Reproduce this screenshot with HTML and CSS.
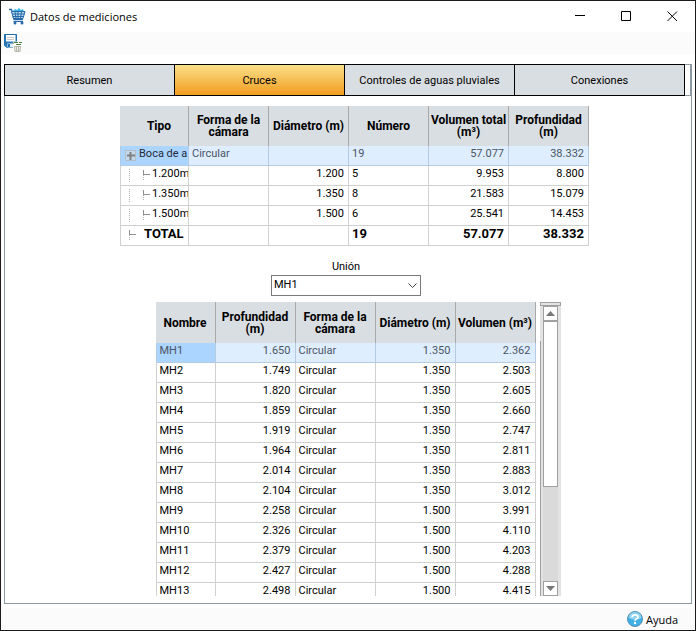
FILE: index.html
```html
<!DOCTYPE html>
<html lang="es">
<head>
    <meta charset="UTF-8">
    <meta name="viewport" content="width=device-width, initial-scale=1.0">
    <title>Datos de mediciones</title>
    <link rel="stylesheet" href="styles.css">
</head>
<body>
    <header class="titlebar">
        <svg class="app-icon" width="17" height="17" viewBox="0 0 17 17" aria-hidden="true">
            <path d="M4 3l2-2 2 1 2-2 2 2 2-1 1 3z" fill="#35b5e8"/>
            <path d="M0 1.500h2.500L5 11.500h9" fill="none" stroke="#2a6aa8" stroke-width="1.300"/>
            <path d="M2.500 3.500h13.500l-2 7H4.500z" fill="#b7dcf0" stroke="#2a6aa8"/>
            <path d="M3.500 6h12M4 8.500h11M6 4l1 6.500M9 4v6.500M12.500 4l-1 6.500" stroke="#2a6aa8" fill="none"/>
            <path d="M4.500 13.500h9.500" stroke="#2a6aa8"/>
            <circle cx="6" cy="15" r="1.500" fill="#2a6aa8"/>
            <circle cx="13" cy="15" r="1.500" fill="#2a6aa8"/>
        </svg>
        <h1 class="title">Datos de mediciones</h1>
        <button class="win-btn" aria-label="Minimizar">
            <svg width="11" height="11" viewBox="0 0 11 11"><path d="M0 4.500h10" stroke="#000"/></svg>
        </button>
        <button class="win-btn" aria-label="Maximizar">
            <svg width="11" height="11" viewBox="0 0 11 11"><path d="M.5.5h9v9h-9z" fill="none" stroke="#000"/></svg>
        </button>
        <button class="win-btn" aria-label="Cerrar">
            <svg width="11" height="11" viewBox="0 0 11 11"><path d="M.5.5l9.500 9.500M10 .5L.5 10" stroke="#000"/></svg>
        </button>
    </header>

    <div class="toolbar">
        <button class="tool-btn" aria-label="Guardar">
            <svg width="18" height="18" viewBox="0 0 18 18">
                <path d="M.5.5h12v13H3l-2.500-2z" fill="#2a7ab8" stroke="#1d6fae"/>
                <path d="M2 1h9.500v6.500H2z" fill="#fff"/>
                <path d="M3 3.500h7M3 5.500h7" stroke="#c8c8c8"/>
                <path d="M3.500 9.500h7v4h-7z" fill="#e6eef5"/>
                <path d="M4 10h2v3H4z" fill="#1d6fae"/>
                <path d="M9 7.500h9v10.500H9z" fill="#fbfbfb"/>
                <path d="M9 9.500l2-1.500M11 8.500h3M15 8.500h3M12 10.500h5" stroke="#4f7d3c"/>
                <path d="M10.500 12.500h6l-.5 5h-5zM12.500 12.500v5M14.500 12.500v5" fill="#f0f0ea" stroke="#b5b5aa"/>
            </svg>
        </button>
    </div>

    <main class="panel">
        <nav class="tabs">
            <button class="tab">Resumen</button>
            <button class="tab active">Cruces</button>
            <button class="tab">Controles de aguas pluviales</button>
            <button class="tab">Conexiones</button>
        </nav>

        <table class="grid summary">
            <thead>
                <tr>
                    <th class="tree-col">Tipo</th>
                    <th>Forma de la cámara</th>
                    <th>Diámetro (m)</th>
                    <th>Número</th>
                    <th>Volumen total (m³)</th>
                    <th>Profundidad (m)</th>
                </tr>
            </thead>
            <tbody>
                <tr class="selected">
                    <td><div class="tree"><svg width="18" height="20" viewBox="0 0 18 20"><path d="M4.500 4.500h10v10h-10z" fill="#c3d9ee" stroke="#b4bcc4"/><path d="M6 9.500h8M9.500 6v8" stroke="#808080" stroke-width="2"/></svg>Boca de a</div></td>
                    <td>Circular</td><td></td><td>19</td><td class="num">57.077</td><td class="num">38.332</td>
                </tr>
                <tr>
                    <td><div class="tree"><svg width="31" height="20" viewBox="0 0 31 20"><path d="M8.500 3v13M22.500 9v6" stroke="#b0b0b0" stroke-dasharray="1 1"/><path d="M22.500 4v5M22 8.500h7" fill="none" stroke="#909090"/></svg>1.200m</div></td>
                    <td></td><td class="num">1.200</td><td>5</td><td class="num">9.953</td><td class="num">8.800</td>
                </tr>
                <tr>
                    <td><div class="tree"><svg width="31" height="20" viewBox="0 0 31 20"><path d="M8.500 3v13M22.500 9v6" stroke="#b0b0b0" stroke-dasharray="1 1"/><path d="M22.500 4v5M22 8.500h7" fill="none" stroke="#909090"/></svg>1.350m</div></td>
                    <td></td><td class="num">1.350</td><td>8</td><td class="num">21.583</td><td class="num">15.079</td>
                </tr>
                <tr>
                    <td><div class="tree"><svg width="31" height="20" viewBox="0 0 31 20"><path d="M8.500 3v13M22.500 9v6" stroke="#b0b0b0" stroke-dasharray="1 1"/><path d="M22.500 4v5M22 8.500h7" fill="none" stroke="#909090"/></svg>1.500m</div></td>
                    <td></td><td class="num">1.500</td><td>6</td><td class="num">25.541</td><td class="num">14.453</td>
                </tr>
                <tr class="total">
                    <td><div class="tree"><svg width="23" height="20" viewBox="0 0 23 20"><path d="M8.500 9v6" stroke="#b0b0b0" stroke-dasharray="1 1"/><path d="M8.500 4v5M8 8.500h7" fill="none" stroke="#909090"/></svg>TOTAL</div></td>
                    <td></td><td></td><td>19</td><td class="num">57.077</td><td class="num">38.332</td>
                </tr>
            </tbody>
        </table>

        <div class="field">
            <label for="union">Unión</label>
            <div class="select-box">
                <select id="union">
                    <option>MH1</option>
                    <option>MH2</option>
                    <option>MH3</option>
                    <option>MH4</option>
                    <option>MH5</option>
                    <option>MH6</option>
                    <option>MH7</option>
                    <option>MH8</option>
                    <option>MH9</option>
                    <option>MH10</option>
                    <option>MH11</option>
                    <option>MH12</option>
                    <option>MH13</option>
                </select>
                <svg class="chevron" width="9" height="6" viewBox="0 0 9 6"><path d="M.5.5l4 4 4-4" fill="none" stroke="#444"/></svg>
            </div>
        </div>

        <div class="list">
            <div class="list-body">
                <table class="grid">
                    <thead>
                        <tr>
                            <th class="name-col">Nombre</th>
                            <th>Profundidad (m)</th>
                            <th>Forma de la cámara</th>
                            <th>Diámetro (m)</th>
                            <th>Volumen (m³)</th>
                        </tr>
                    </thead>
                    <tbody>
                        <tr class="selected"><td>MH1</td><td class="num">1.650</td><td>Circular</td><td class="num">1.350</td><td class="num">2.362</td></tr>
                        <tr><td>MH2</td><td class="num">1.749</td><td>Circular</td><td class="num">1.350</td><td class="num">2.503</td></tr>
                        <tr><td>MH3</td><td class="num">1.820</td><td>Circular</td><td class="num">1.350</td><td class="num">2.605</td></tr>
                        <tr><td>MH4</td><td class="num">1.859</td><td>Circular</td><td class="num">1.350</td><td class="num">2.660</td></tr>
                        <tr><td>MH5</td><td class="num">1.919</td><td>Circular</td><td class="num">1.350</td><td class="num">2.747</td></tr>
                        <tr><td>MH6</td><td class="num">1.964</td><td>Circular</td><td class="num">1.350</td><td class="num">2.811</td></tr>
                        <tr><td>MH7</td><td class="num">2.014</td><td>Circular</td><td class="num">1.350</td><td class="num">2.883</td></tr>
                        <tr><td>MH8</td><td class="num">2.104</td><td>Circular</td><td class="num">1.350</td><td class="num">3.012</td></tr>
                        <tr><td>MH9</td><td class="num">2.258</td><td>Circular</td><td class="num">1.500</td><td class="num">3.991</td></tr>
                        <tr><td>MH10</td><td class="num">2.326</td><td>Circular</td><td class="num">1.500</td><td class="num">4.110</td></tr>
                        <tr><td>MH11</td><td class="num">2.379</td><td>Circular</td><td class="num">1.500</td><td class="num">4.203</td></tr>
                        <tr><td>MH12</td><td class="num">2.427</td><td>Circular</td><td class="num">1.500</td><td class="num">4.288</td></tr>
                        <tr><td>MH13</td><td class="num">2.498</td><td>Circular</td><td class="num">1.500</td><td class="num">4.415</td></tr>
                    </tbody>
                </table>
            </div>
            <div class="scroll">
                <div class="scroll-cap"></div>
                <div class="scroll-bar">
                    <button class="scroll-btn" aria-label="Subir"><svg width="9" height="5" viewBox="0 0 9 5"><path d="M0 5l4.500-5L9 5z" fill="#777"/></svg></button>
                    <div class="track"><div class="thumb"></div></div>
                    <button class="scroll-btn" aria-label="Bajar"><svg width="9" height="5" viewBox="0 0 9 5"><path d="M0 0l4.500 5L9 0z" fill="#777"/></svg></button>
                </div>
            </div>
        </div>
    </main>

    <footer class="statusbar">
        <button class="help">
            <svg width="16" height="16" viewBox="0 0 16 16" aria-hidden="true">
                <circle cx="8" cy="8" r="7.500" fill="#3fb0e6" stroke="#5a8fb0"/>
                <path d="M1.500 7a6.500 6 0 0 1 13 0q-6 3-13 0z" fill="#8fd2f2"/>
                <path d="M5 6.300q.2-2.500 3-2.500t3 2.200q0 1.300-1.700 2-1.300.6-1.300 1.800" fill="none" stroke="#fff" stroke-width="1.800"/>
                <circle cx="8" cy="12" r="1.200" fill="#fff"/>
            </svg>
            Ayuda
        </button>
    </footer>
</body>
</html>
```
FILE: styles.css
```css
* {
    box-sizing: border-box;
}
body {
    margin: 0;
    height: 100vh;
    display: flex;
    flex-direction: column;
    border: 1px solid #1c1a1c;
    background: #fff;
    color: #000;
    font-family: Roboto, "Liberation Sans", sans-serif;
    font-size: 11px;
}
button {
    margin: 0;
    padding: 0;
    border: 0;
    background: none;
    color: inherit;
    font: inherit;
}
svg {
    display: block;
    flex: none;
}

/* window frame */
.titlebar {
    display: flex;
    align-items: center;
    height: 31px;
    padding-left: 8px;
}
.title {
    flex: 1;
    margin: 0 0 0 4px;
    font: 11px "Open Sans", sans-serif;
}
.win-btn {
    display: flex;
    align-items: center;
    justify-content: center;
    width: 46px;
    height: 30px;
}
.toolbar {
    height: 22px;
    padding: 2px 3px;
    background: #fbfbfb;
}
.tool-btn {
    display: block;
}
.statusbar {
    display: flex;
    justify-content: flex-end;
    height: 22px;
    padding-right: 17px;
    background: #fbfbfb;
}
.help {
    display: flex;
    align-items: center;
    gap: 3px;
    font: 11px "Open Sans", sans-serif;
}

.panel {
    flex: 1;
    min-height: 0;
    display: flex;
    flex-direction: column;
    align-items: center;
    margin: 10px 3px 4px;
    padding-bottom: 7px;
    border: 1px solid #8c9aa3;
}

/* tabs */
.tabs {
    display: flex;
    align-self: stretch;
    height: 32px;
    margin: -1px 6px 10px -1px;
    border: 1px solid #000;
    border-left: 0;
    box-shadow: 6px 0 0 -1px #fff, 6px 0 0 0 #8c9aa3;
}
.tab {
    flex: 1;
    border-left: 1px solid #000;
    background: #d9dee2;
}
.tab.active {
    background: linear-gradient(#fbe08a, #f19c1f);
}

/* tables */
.grid {
    table-layout: fixed;
    border-collapse: separate;
    border-spacing: 0;
}
.grid th {
    width: 80px;
    height: 40px;
    padding: 0;
    border-right: 1px solid #a9a9a9;
    background: #d9dee2;
    font-size: 12px;
    line-height: 12px;
}
.grid td {
    height: 20px;
    padding: 0 4px 0 3px;
    border-right: 1px solid #d0d0d0;
    border-bottom: 1px solid #d0d0d0;
    line-height: 15px;
    vertical-align: top;
    white-space: nowrap;
}
.grid td:first-child {
    border-left: 1px solid #d0d0d0;
}
.grid .num {
    text-align: right;
}
.grid .selected td {
    border-color: #b5cbe3;
    background: #deeeff;
    color: #4b5563;
}
.grid .selected td:first-child {
    background: #abd4ff;
}
.summary {
    width: 469px;
    margin-left: 13px;
}
.grid .tree-col {
    width: 69px;
    padding-left: 10px;
}
.summary td:first-child {
    padding: 0;
}
.summary .selected td:first-child {
    color: #1f2937;
}
.tree {
    display: flex;
    height: 19px;
    overflow: hidden;
}
.total td {
    font-size: 13px;
    font-weight: bold;
}

.field {
    display: flex;
    flex-direction: column;
    align-items: center;
    width: 150px;
    margin: 13px 4px 6px 0;
}
.field label {
    line-height: 16px;
}
.select-box {
    position: relative;
    width: 100%;
}
.select-box select {
    display: block;
    width: 100%;
    height: 21px;
    padding: 0 20px 2px 2px;
    appearance: none;
    border: 1px solid #7a7a7a;
    border-radius: 0;
    background: #fff;
    color: inherit;
    font: inherit;
}
.chevron {
    position: absolute;
    top: 8px;
    right: 4px;
}

/* junction list */
.list {
    flex: 1;
    min-height: 0;
    display: flex;
    gap: 4px;
    margin-left: 20px;
}
.list-body {
    overflow: hidden;
}
.list .grid {
    width: 380px;
}
.list .grid th {
    height: 41px;
}
.list .name-col {
    width: 60px;
}
.scroll {
    display: flex;
    flex-direction: column;
    width: 21px;
    background: linear-gradient(#a0a0a0, #a0a0a0) 0 39px / 1px 100% no-repeat #e3e3e3;
}
.scroll-cap {
    height: 4px;
    border: 1px solid #a0a0a0;
}
.scroll-bar {
    flex: 1;
    display: flex;
    flex-direction: column;
    margin: 0 3px;
}
.scroll-btn {
    display: flex;
    align-items: center;
    justify-content: center;
    height: 15px;
    border: 1px solid #a0a0a0;
    background: #fff;
}
.track {
    flex: 1;
    background: #dadada;
}
.thumb {
    height: 64%;
    border: 1px solid #a0a0a0;
    background: #fff;
}
```
